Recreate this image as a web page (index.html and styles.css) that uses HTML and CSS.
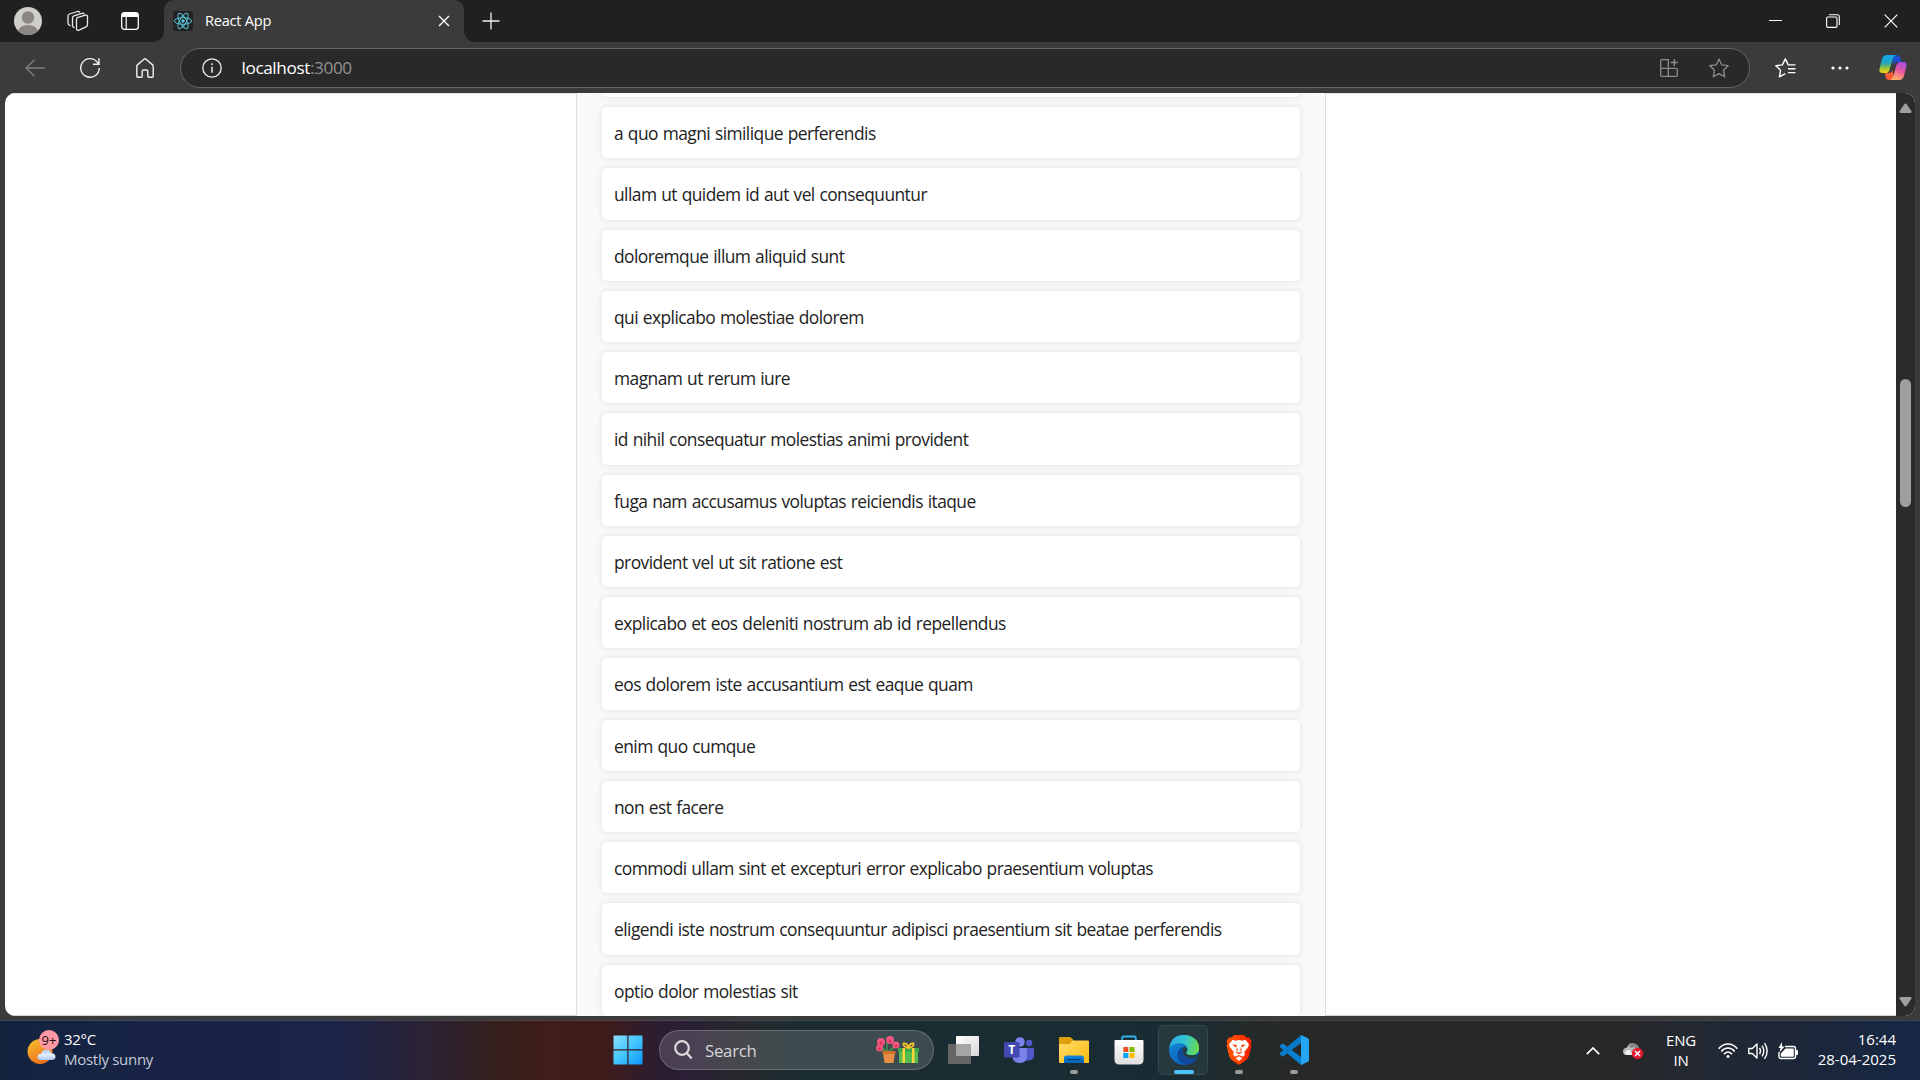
FILE: index.html
```html
<!DOCTYPE html>
<html lang="en">
<head>
<meta charset="utf-8">
<title>React App</title>
<link rel="stylesheet" href="styles.css">
</head>
<body>
<div class="screen">
  <header class="titlebar">
    <svg class="ic-profile" width="28" height="28" viewBox="0 0 28 28"><defs><clipPath id="pc"><circle cx="14" cy="14" r="14"/></clipPath></defs><circle cx="14" cy="14" r="14" fill="#cfcdca"/><g clip-path="url(#pc)" fill="#8a8683"><circle cx="14" cy="10.500" r="6.200"/><ellipse cx="14" cy="24.500" rx="10" ry="6.500"/></g></svg>
    <svg class="ic-workspaces" width="22" height="22" viewBox="0 0 22 22" fill="none" stroke="#e8e8e8" stroke-width="1.300" stroke-linejoin="round" stroke-linecap="round"><path d="M9.500 9.300q0-1.500 1.500-2l7.500-2.100q2-.4 2 1.300v8.300q0 1.500-1.500 2l-7 3.300q-2.500.8-2.500-1.500z"/><path d="M7 17.500q-1.500-.3-1.500-2V8q0-1.700 1.500-2.200l8-2.500q1.600-.4 2 .8"/><path d="M3 15.500q-2-.5-2-2.500V6.300q0-1.800 1.500-2.300l8-2.500q1.800-.4 2.200.7"/></svg>
    <svg class="ic-tabs" width="18" height="18" viewBox="0 0 18 18"><rect x=".7" y=".7" width="16.600" height="16.600" rx="2.500" fill="none" stroke="#fff" stroke-width="1.300"/><path d="M1 5V3q0-2 2-2h12q2 0 2 2v2z" fill="#fff"/><path d="M5.200 5v12" stroke="#fff" stroke-width="1.200"/></svg>
    <div class="tab">
      <svg width="20" height="20" viewBox="0 0 20 20"><rect width="20" height="20" rx="2" fill="#222"/><g fill="none" stroke="#58c4dc" stroke-width="1"><ellipse cx="10" cy="10" rx="8.600" ry="3.300"/><ellipse cx="10" cy="10" rx="8.600" ry="3.300" transform="rotate(60 10 10)"/><ellipse cx="10" cy="10" rx="8.600" ry="3.300" transform="rotate(120 10 10)"/></g><circle cx="10" cy="10" r="1.700" fill="#58c4dc"/></svg>
      <span class="tab-title">React App</span>
      <svg class="tab-close" width="12" height="12" viewBox="0 0 12 12" stroke="#fff" stroke-width="1.400"><path d="M1 1l10 10M11 1L1 11"/></svg>
    </div>
    <svg class="ic-plus" width="18" height="18" viewBox="0 0 18 18" stroke="#f0f0f0" stroke-width="1.300"><path d="M9 .5v17M.5 9h17"/></svg>
    <div class="window-controls">
      <svg width="13" height="14" viewBox="0 0 13 14" stroke="#fff"><path d="M0 6.500h13"/></svg>
      <svg width="14" height="14" viewBox="0 0 14 14" fill="none" stroke="#fff" stroke-width="1.100"><rect x=".6" y="3" width="10.400" height="10.400" rx="1.300"/><path d="M3 .7h8.300q2 0 2 2V11"/></svg>
      <svg width="14" height="14" viewBox="0 0 14 14" stroke="#fff" stroke-width="1.200"><path d="M.7.700l12.600 12.600M13.300.700L.7 13.300"/></svg>
    </div>
  </header>

  <nav class="toolbar">
    <svg class="ic-back" width="20" height="18" viewBox="0 0 20 18" fill="none" stroke="#808080" stroke-width="1.300"><path d="M20 9H1M9.500.700L1 9l8.500 8.300"/></svg>
    <svg class="ic-reload" width="22" height="22" viewBox="0 0 22 22" fill="none" stroke="#f0f0f0" stroke-width="1.400"><path d="M20.300 11A9.300 9.300 0 1 1 18.400 5.300L19.600 6.800M20 1.300v6h-6"/></svg>
    <svg class="ic-home" width="18" height="20" viewBox="0 0 18 20" fill="none" stroke="#f0f0f0" stroke-width="1.400" stroke-linejoin="round"><path d="M.8 8.200q0-.8.600-1.300L8 1.200q1-.8 2 0l6.600 5.700q.6.500.6 1.300V18q0 1.200-1.200 1.200h-3.200q-1 0-1-1v-5q0-1.200-1.200-1.200H7.400q-1.200 0-1.200 1.200v5q0 1-1 1H2Q.8 19.200.8 18z"/></svg>
    <div class="address">
      <svg width="20" height="20" viewBox="0 0 20 20" fill="none" stroke="#f0f0f0" stroke-width="1.300"><circle cx="10" cy="10" r="9.200"/><path d="M10 8.700v6M10 5.300v1.700" stroke-width="1.500"/></svg>
      <span class="url">localhost<span class="port">:3000</span></span>
      <svg class="ic-apps" width="18" height="18" viewBox="0 0 18 18" fill="none" stroke="#8c8c8c" stroke-width="1.300"><path d="M.7 9.300V2Q.7.700 2 .7h6.300v16.600H2Q.7 17.300.7 16V9.300h15.200q1.400 0 1.400 1.400V16q0 1.300-1.300 1.300H8.300M14.300 0v7M10.800 3.500h7"/></svg>
      <svg class="ic-star" width="20" height="20" viewBox="0 0 20 20" fill="none" stroke="#8c8c8c" stroke-width="1.300" stroke-linejoin="round"><path d="M10 .9l2.800 6 6.400.8-4.700 4.500 1.200 6.600L10 15.600l-5.700 3.200 1.200-6.600L.8 7.700l6.400-.8z"/></svg>
    </div>
    <svg class="ic-fav" width="21" height="20" viewBox="0 0 21 20" fill="none" stroke="#fff" stroke-width="1.400" stroke-linejoin="round"><path d="M20.500 6.900h-7.300L10.300.9l-2.900 6-6.600.8 4.800 4.500-1.200 6.600 5.900-3.200M13 10.700h7.500M13 14.600h7.500"/></svg>
    <svg class="ic-more" width="18" height="4" viewBox="0 0 18 4" fill="#fff"><circle cx="2" cy="2" r="1.600"/><circle cx="9" cy="2" r="1.600"/><circle cx="16" cy="2" r="1.600"/></svg>
    <svg class="ic-copilot" width="28" height="27" viewBox="0 0 28 27"><defs><linearGradient id="ca" x1="0" y1="0" x2="0" y2="1"><stop offset="0" stop-color="#13a6f0"/><stop offset=".45" stop-color="#22a6b8"/><stop offset=".75" stop-color="#9cc52f"/><stop offset="1" stop-color="#ffd21c"/></linearGradient><linearGradient id="cb" x1=".8" y1="0" x2=".4" y2="1"><stop offset="0" stop-color="#a04be8"/><stop offset=".5" stop-color="#e85a9b"/><stop offset="1" stop-color="#ffb06a"/></linearGradient></defs><path d="M13 1h5q2.500 0 3.200 2.600L22.500 8H18q-2.500 0-3.500 3z" fill="#1c4fd0"/><path d="M15 26h-5q-2.400 0-3.200-2.600L6 19h4q2.500 0 3.500-3z" fill="#fb5b35"/><path d="M8 1h9q-2.200.5-3 3.500L10.500 16q-1 3-3.500 3H3.500Q-.5 19 .6 14.500L3 5Q4.200 1 8 1z" fill="url(#ca)"/><path d="M20 26h-9q2.200-.5 3-3.500L17.500 11q1-3 3.500-3h3.500q4 0 2.900 4.500L25 22q-1.200 4-5 4z" fill="url(#cb)"/></svg>
  </nav>

  <div class="viewport">
    <main class="page">
      <ul class="list">
        <li class="item"></li>
        <li class="item">a quo magni similique perferendis</li>
        <li class="item">ullam ut quidem id aut vel consequuntur</li>
        <li class="item">doloremque illum aliquid sunt</li>
        <li class="item">qui explicabo molestiae dolorem</li>
        <li class="item">magnam ut rerum iure</li>
        <li class="item">id nihil consequatur molestias animi provident</li>
        <li class="item">fuga nam accusamus voluptas reiciendis itaque</li>
        <li class="item">provident vel ut sit ratione est</li>
        <li class="item">explicabo et eos deleniti nostrum ab id repellendus</li>
        <li class="item">eos dolorem iste accusantium est eaque quam</li>
        <li class="item">enim quo cumque</li>
        <li class="item">non est facere</li>
        <li class="item">commodi ullam sint et excepturi error explicabo praesentium voluptas</li>
        <li class="item">eligendi iste nostrum consequuntur adipisci praesentium sit beatae perferendis</li>
        <li class="item">optio dolor molestias sit</li>
      </ul>
    </main>
    <div class="scrollbar">
      <svg width="13" height="11" viewBox="0 0 13 11"><path d="M5.300 1.300q1.200-1.400 2.400 0l4.700 6.900q.7 1.800-1.200 1.800H1.800Q-.1 10 .6 8.200z" fill="#9f9f9f"/></svg>
      <div class="thumb"></div>
      <svg class="down" width="13" height="11" viewBox="0 0 13 11"><path d="M5.300 1.300q1.200-1.400 2.400 0l4.700 6.900q.7 1.800-1.200 1.800H1.800Q-.1 10 .6 8.200z" fill="#9f9f9f" transform="rotate(180 6.500 5.500)"/></svg>
    </div>
  </div>

  <footer class="taskbar">
    <div class="weather">
      <svg width="34" height="36" viewBox="0 0 34 36"><defs><linearGradient id="sun" x1="0" y1="0" x2=".5" y2="1"><stop offset="0" stop-color="#f5c331"/><stop offset="1" stop-color="#f0711a"/></linearGradient><linearGradient id="cl" x1="0" y1="0" x2="0" y2="1"><stop offset="0" stop-color="#a9c8f8"/><stop offset=".5" stop-color="#e6effc"/><stop offset="1" stop-color="#a8c4f2"/></linearGradient></defs><circle cx="13" cy="21.500" r="12.500" fill="url(#sun)"/><path d="M14 30q-3.500 0-3.500-3t3.500-3.300q1.500-4.200 5.500-4t5 3.500q4 .3 4 3.500T24.500 30z" fill="url(#cl)"/><circle cx="22" cy="10" r="10" fill="#ff99a4"/><text x="22" y="15" text-anchor="middle" class="badge-text">9+</text></svg>
      <div class="weather-text"><div class="temp">32°C</div><div class="cond">Mostly sunny</div></div>
    </div>

    <div class="apps">
      <div class="slot"><svg width="30" height="30" viewBox="0 0 30 30"><defs><linearGradient id="wn" gradientUnits="userSpaceOnUse" x1="0" y1="0" x2="30" y2="30"><stop offset="0" stop-color="#8adfff"/><stop offset=".5" stop-color="#42c6fd"/><stop offset="1" stop-color="#0a94f8"/></linearGradient></defs><path d="M1 .5h13.300v13.800H.5V1zM15.500.500h13q1 0 1 1v12.800h-14zM.5 15.500h13.800v14H1.500q-1 0-1-1zM15.500 15.500h14v13q0 1-1 1h-13z" fill="url(#wn)"/></svg></div>
      <div class="search">
        <svg width="19" height="20" viewBox="0 0 19 20" fill="none" stroke="#dcdcdc" stroke-width="2.200"><circle cx="8" cy="8" r="6.800"/><path d="M12.700 13l5 5.500"/></svg>
        <span class="search-label">Search</span>
        <svg width="43" height="28" viewBox="0 0 43 28"><path d="M11 17V6M11 16L5 10M12 16l7-6M10 15L5 14M13 15l5-3" stroke="#3f8f4b" stroke-width="1.600" fill="none"/><g fill="#f0567f"><circle cx="5" cy="6" r="4"/><circle cx="14" cy="4" r="4"/><circle cx="20" cy="9" r="3.600"/><circle cx="3.500" cy="12" r="3.500"/></g><g fill="#d62f61"><circle cx="5" cy="7" r="1.500"/><circle cx="14" cy="5" r="1.500"/><circle cx="3.500" cy="13" r="1.300"/><circle cx="20" cy="10" r="1.300"/></g><path d="M7 16h12l-1.500 11h-9z" fill="#e98f45"/><path d="M6.500 15h13v3h-13z" fill="#d3702b"/><path d="M22 12h21v4H22z" fill="#3da84a"/><path d="M23 16h19v11H23z" fill="#55bb4f"/><path d="M26.500 12h2.500v15h-2.500zM36 12h2.500v15H36z" fill="#ffd53d"/><path d="M32.500 12q-1-5-5-4.500-1 3.500 5 4.500 6-1 5-4.500-4-.5-5 4.500" stroke="#f8c32c" stroke-width="1.800" fill="none"/></svg>
      </div>
      <div class="slot slot-first"><svg width="31" height="30" viewBox="0 0 31 30"><defs><linearGradient id="tv" x1="0" y1="0" x2="1" y2="1"><stop offset="0" stop-color="#fff"/><stop offset="1" stop-color="#d8d8d8"/></linearGradient></defs><rect x="8" y="1" width="23" height="20" rx="1" fill="url(#tv)"/><rect x="0" y="9" width="23" height="20" rx="1" fill="#656565"/><path d="M8 9h15v12H9q-1 0-1-1z" fill="#a6a6a6"/></svg></div>
      <div class="slot"><svg width="30" height="28" viewBox="0 0 30 28"><circle cx="16" cy="6" r="4.800" fill="#7b83eb"/><circle cx="25.200" cy="7" r="3.200" fill="#5059c9"/><path d="M19 12h10q1 0 1 1v6q0 5-5 5.500h-4z" fill="#5059c9"/><path d="M10 12h12q1 0 1 1v7q0 7-7 7-6 0-7.500-5z" fill="#7b83eb"/><rect x="0" y="6" width="15.500" height="15.500" rx="1.300" fill="#4249b0"/><text x="7.700" y="18" text-anchor="middle" class="teams-text">T</text></svg></div>
      <div class="slot running"><svg width="30" height="28" viewBox="0 0 30 28"><defs><linearGradient id="fo" x1="0" y1="0" x2="1" y2="1"><stop offset="0" stop-color="#ffdf68"/><stop offset="1" stop-color="#fdb813"/></linearGradient><linearGradient id="fb" x1="0" y1="0" x2="0" y2="1"><stop offset="0" stop-color="#1389dd"/><stop offset="1" stop-color="#0560b4"/></linearGradient></defs><path d="M0 6V2q0-1 1-1h9.500q1 0 1.500.6L14.500 4v4H0z" fill="#dfa10b"/><path d="M0 8h10.500L14 4.500h15q1 0 1 1V27H1q-1 0-1-1z" fill="url(#fo)"/><path d="M5 27v-5q0-2.500 2.500-2.500h15Q25 19.500 25 22v5z" fill="url(#fb)"/><path d="M8.500 23.500h13" stroke="#073f83" stroke-width="1.200"/></svg></div>
      <div class="slot"><svg width="30" height="30" viewBox="0 0 30 30"><defs><linearGradient id="st" x1="0" y1="0" x2="0" y2="1"><stop offset="0" stop-color="#fff"/><stop offset="1" stop-color="#dedede"/></linearGradient></defs><path d="M8.200 6V2.700q0-1.200 1.200-1.200h11.200q1.200 0 1.200 1.200V6" fill="none" stroke="#31b4ee" stroke-width="1.800"/><path d="M.5 6q0-1 1-1h27q1 0 1 1v18.500q0 5-5 5h-19q-5 0-5-5z" fill="url(#st)"/><path d="M9.300 12h5v5h-5z" fill="#f25022"/><path d="M15.500 12h5v5h-5z" fill="#7fba00"/><path d="M9.300 18h5v5h-5z" fill="#00a4ef"/><path d="M15.500 18h5v5h-5z" fill="#ffb900"/></svg></div>
      <div class="slot active"><svg width="30" height="30" viewBox="0 0 30 30"><defs><linearGradient id="ea" x1="0" y1=".3" x2="1" y2=".5"><stop offset="0" stop-color="#2aa8e6"/><stop offset=".5" stop-color="#35c5d0"/><stop offset="1" stop-color="#69dc4c"/></linearGradient><linearGradient id="eb" x1="0" y1="0" x2=".3" y2="1"><stop offset="0" stop-color="#178fdc"/><stop offset="1" stop-color="#0b65bd"/></linearGradient></defs><circle cx="15" cy="15" r="15" fill="url(#eb)"/><path d="M.3 13Q2 0 15 0q10 0 14 8 2.500 5.500-.2 9.300-2.300 3-6.300 3-5.500 0-5.500-3 2-1.500 1.500-4-1-4.500-7-5Q4 8 .3 13z" fill="url(#ea)"/><path d="M14 12q-6 2-5.500 8.500.8 6.500 7.500 9.300 7.500.4 11.500-5.800.6-1.700-1-1.200-4 1.600-8 0Q12 20 14 12z" fill="#10489a"/><path d="M14 12q-2 8 4.500 10.800 4 1.400 8 0l.7.100q2-1.600 3-4.200-1.500 1.600-7.700 1.600-5.500 0-5.500-3 1.300-1.300 1.500-2.800Q17 11 14 12z" fill="#233d43"/></svg></div>
      <div class="slot running"><svg width="26" height="30" viewBox="0 0 26 30"><defs><linearGradient id="br" x1="0" y1="0" x2="1" y2="0"><stop offset="0" stop-color="#ff5500"/><stop offset=".5" stop-color="#ff4000"/><stop offset="1" stop-color="#f51b00"/></linearGradient></defs><path d="M8 0h10l2.500 2.700 2.300-.5L25.500 6l-.7 2.500.7 2-2.800 11q-.6 2-2.200 3.200L14.500 29q-1.500 1.200-3 0l-6-4.300Q3.900 23.500 3.300 21.500l-2.800-11 .7-2L.5 6l2.700-3.800 2.300.5z" fill="url(#br)"/><path d="M13 5l3.500.8 3-1 3.500 4.500-.8 2.700-4 5 .8 2.500-2 2.300L13 20l-4 1.800L7 19.500l.8-2.500-4-5L3 9.300l3.500-4.500 3 1zM13 21.300l3.300 2L13 26l-3.300-2.700z" fill="#fff"/><path d="M6 9.500l5 .4-1 2.600zM20 9.500l-5 .4 1 2.600zM11 12l.8 2.800-.9 1.900 2.100 1.100 2.100-1.100-.9-1.900L15 12l.6 3-.4 1.200.8 1.300L13 19.200l-3-1.700.8-1.300-.4-1.200z" fill="#ff3d00"/></svg></div>
      <div class="slot running"><svg width="30" height="30" viewBox="0 0 30 30"><path d="M1 10.500l2-1.800q.7-.5 1.500 0L24 23.500V29L22 30 .8 12q-.8-.8.2-1.500z" fill="#0b7fd0"/><path d="M1 19.500l2 1.800q.7.500 1.500 0L24 6.500V1L22 0 .8 18q-.8.800.2 1.500z" fill="#0879c6"/><path d="M22 0l7 3.200q1 .5 1 1.600v20.400q0 1.100-1 1.600L22 30z" fill="#25a5f2"/></svg></div>
    </div>

    <div class="tray">
      <svg class="chev" width="14" height="8" viewBox="0 0 14 8" fill="none" stroke="#fff" stroke-width="1.700"><path d="M.8 7.200L7 1l6.200 6.200"/></svg>
      <svg class="cloud" width="21" height="18" viewBox="0 0 21 18"><path d="M4 13q-4 0-4-3.500T4 5.500Q6 0 11 1.500q4 1 4.500 5 2.500 1 2 4T14 13z" fill="#b8b8b8"/><path d="M6 3.500Q9 0 13 2t3 6l-5-3-3 1z" fill="#868686"/><path d="M1.500 12q0-4 5-4.500L10 13H4z" fill="#eee"/><circle cx="14.500" cy="11.500" r="5.700" fill="#e01b2c"/><path d="M12 9l5 5m0-5l-5 5" stroke="#fff" stroke-width="1.500"/></svg>
      <div class="lang"><div>ENG</div><div>IN</div></div>
      <svg class="wifi" width="20" height="16" viewBox="0 0 20 16" fill="none" stroke="#fff" stroke-width="1.500"><path d="M.7 5.700q4-4.700 9.300-4.700t9.300 4.700M3.300 8.500q2.800-3.400 6.700-3.400t6.700 3.400M6 11.300q1.600-2.200 4-2.200t4 2.200"/><circle cx="10" cy="13.600" r="1.500" fill="#fff" stroke="none"/></svg>
      <svg class="vol" width="20" height="18" viewBox="0 0 20 18" fill="none" stroke="#fff" stroke-width="1.400" stroke-linejoin="round"><path d="M.8 6.500h3.500L9 2v14l-4.700-4.500H.8zM11.500 6q2 3 0 6M14 3.700q3.700 5.300 0 10.600M16.500 1.200q5.300 7.800 0 15.600"/></svg>
      <svg class="bat" width="20" height="18" viewBox="0 0 20 18"><path d="M7 4.500h8.500q2 0 2 2v8q0 2-2 2H3q-2 0-2-2V10" fill="none" stroke="#fff" stroke-width="1.400"/><path d="M7.500 6.500H15q.8 0 .8.800v6.600q0 .8-.8.800H3.600q-.8 0-.8-.8v-2.400zM18 8h1.300q.7 0 .7.700v3.600q0 .7-.7.700H18zM4 0L.5 6h2L1.500 10.500 6.500 4.500H4z" fill="#fff"/></svg>
      <div class="clock"><div>16:44</div><div>28-04-2025</div></div>
    </div>
  </footer>
</div>
</body>
</html>
```

FILE: styles.css
```css
* { box-sizing: border-box; }

body {
  margin: 0;
  overflow: hidden;
  font-family: "Open Sans", "Noto Sans", sans-serif;
}

svg { display: block; flex: none; }

.screen {
  width: 1920px;
  height: 1080px;
  display: flex;
  flex-direction: column;
  background: #3b3b3b;
  overflow: hidden;
}

.titlebar {
  height: 42px;
  flex: none;
  display: flex;
  align-items: center;
  padding-left: 14px;
  background: #202020;
}

.ic-workspaces { margin-left: 25px; }
.ic-tabs { margin-left: 32px; }

.tab {
  position: relative;
  width: 300px;
  height: 42px;
  margin-left: 25px;
  padding: 0 14px 0 9px;
  display: flex;
  align-items: center;
  background: #3b3b3b;
  border-radius: 10px 10px 0 0;
}

.tab::before,
.tab::after {
  content: "";
  position: absolute;
  bottom: 0;
  width: 10px;
  height: 10px;
}

.tab::before {
  left: -10px;
  background: radial-gradient(circle at 0 0, #202020 9.5px, #3b3b3b 10px);
}

.tab::after {
  right: -10px;
  background: radial-gradient(circle at 100% 0, #202020 9.5px, #3b3b3b 10px);
}

.tab-title {
  margin: 0 0 2px 12px;
  font-size: 14.6px;
  letter-spacing: -0.25px;
  color: #fff;
  white-space: nowrap;
}

.tab-close { margin-left: auto; }
.ic-plus { margin-left: 18px; }

.window-controls {
  margin-left: auto;
  padding-right: 22px;
  display: flex;
  align-items: center;
  gap: 44px;
}

.toolbar {
  height: 51px;
  flex: none;
  display: flex;
  align-items: center;
  padding-left: 25px;
}

.ic-reload { margin-left: 34px; }
.ic-home { margin-left: 35px; }

.address {
  width: 1570px;
  height: 40px;
  margin-left: 26px;
  padding: 0 20px 0 21px;
  display: flex;
  align-items: center;
  background: #292929;
  border: 1px solid #666;
  border-radius: 20px;
}

.url {
  margin: 0 auto 1px 19.5px;
  font-size: 17.2px;
  letter-spacing: -0.4px;
  color: #fff;
}

.port { color: #929292; }
.ic-star { margin-left: 31px; }
.ic-fav { margin-left: 25px; }
.ic-more { margin-left: 35px; }
.ic-copilot { margin-left: 30px; }

.viewport {
  height: 923px;
  flex: none;
  margin: 0 5px;
  display: flex;
  background: #fff;
  border-radius: 10px;
  overflow: hidden;
}

.page {
  flex: 1;
  display: flex;
  justify-content: center;
  align-items: flex-start;
  overflow: hidden;
  box-shadow: inset 0 -1px #d4d4d4, inset 0 1px #e4e4e4;
}

.list {
  width: 750px;
  margin: -73.25px 0 0;
  padding: 25px;
  list-style: none;
  background: #f9f9f9;
  border: 1px solid #ddd;
}

.item {
  height: 51.25px;
  margin-bottom: 10px;
  padding: 0 12.5px;
  line-height: 52.5px;
  font-size: 17.4px;
  letter-spacing: -0.55px;
  word-spacing: 0.75px;
  color: #222;
  white-space: nowrap;
  background: #fff;
  border-radius: 5px;
  box-shadow: 0 0 6px rgba(0, 0, 0, 0.1);
}

.scrollbar {
  width: 19px;
  padding: 10px 0 9px 3px;
  display: flex;
  flex-direction: column;
  background: #2b2b2b;
}

.thumb {
  width: 11px;
  height: 128px;
  margin: 265px 0 auto 1px;
  background: #9f9f9f;
  border-radius: 6px;
}

.taskbar {
  height: 60px;
  margin-top: 4px;
  flex: none;
  display: grid;
  grid-template-columns: 600px 722px 1fr;
  align-items: center;
  border-top: 1px solid rgba(120, 130, 140, 0.35);
  background: linear-gradient(90deg, #13243f 0, #182345 150px, #1a2449 330px, #292339 410px, #34201f 490px, #3f1e18 540px, #401b19 600px, #2b1d32 660px, #2a2035 690px, #26292c 745px, #1b2d32 800px, #192c33 1180px, #242a29 1250px, #282826 1320px, #282826 1600px, #222833 1710px, #1b263a 1820px, #172846 1920px);
}

.weather {
  display: flex;
  align-items: center;
  padding-left: 27px;
  gap: 3px;
}

.weather svg { margin-top: -6px; }
.badge-text { font-size: 13px; fill: #241015; }
.weather-text { font-size: 15px; letter-spacing: -0.28px; line-height: 20px; margin-top: -4px; color: #fff; }
.cond { color: #c5cad6; }

.apps {
  height: 58px;
  display: flex;
  align-items: center;
  padding-bottom: 1px;
}

.slot {
  position: relative;
  width: 55px;
  height: 50px;
  display: flex;
  align-items: center;
  justify-content: center;
}

.slot-first { margin-left: 2px; }

.running::after,
.active::after {
  content: "";
  position: absolute;
  bottom: 1px;
  left: 24px;
  width: 8px;
  height: 4px;
  border-radius: 2px;
  background: #9b9b9b;
}

.active::before {
  content: "";
  position: absolute;
  inset: 0 3px 0 2px;
  border: 1px solid #34474c;
  border-radius: 5px;
  background: #26383e;
}

.active svg { position: relative; }
.active::after { left: 18px; width: 20px; background: #4cc2ff; }

.search {
  width: 275px;
  height: 40px;
  margin-left: 4px;
  padding: 0 14px;
  display: flex;
  align-items: center;
  border: 1px solid rgba(255, 255, 255, 0.2);
  border-radius: 20px;
  background: rgba(255, 255, 255, 0.15);
}

.search-label {
  margin: 0 auto 0 12px;
  font-size: 16.8px;
  letter-spacing: -0.25px;
  color: #d5d7d8;
}

.teams-text { font-size: 12px; font-weight: 700; fill: #fff; }

.tray {
  display: flex;
  align-items: center;
  padding-right: 24px;
  color: #fff;
  font-size: 15px;
  line-height: 20px;
}

.chev { margin-left: 264px; }
.cloud { margin-left: 23px; }
.lang { width: 40px; margin-left: 17px; margin-top: -1px; text-align: center; letter-spacing: -0.2px; }
.wifi { margin-left: 17px; }
.vol { margin-left: 10px; }
.bat { margin-left: 10px; }
.clock { margin-left: auto; margin-top: -4px; text-align: right; white-space: nowrap; }
```
